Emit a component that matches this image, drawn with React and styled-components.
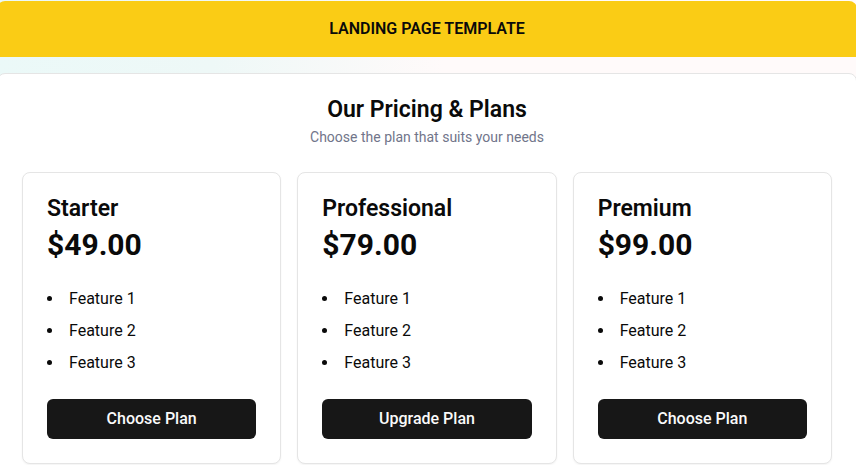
import React from "react";
import styled, { createGlobalStyle } from "styled-components";

const GlobalStyle = createGlobalStyle`
  *, *::before, *::after { box-sizing: border-box; }
  html { scrollbar-width: none; }
  body {
    margin: 0;
    overflow-x: hidden;
    background: #ffffff;
    color: #0a0a0a;
    font-family: Roboto, "Liberation Sans", sans-serif;
    font-size: 16px;
    line-height: 24px;
  }
  h1, h2, h3, p, ul { margin: 0; padding: 0; }
`;

const Page = styled.div`
  display: flex;
  flex-direction: column;
  gap: 16px;
  margin: 0 -1px 0 -3px;
  padding-top: 1px;
  background: linear-gradient(90deg, #ebf9f8 0%, #eef8f7 25%, #fffafa 52%, #fffafa 100%);
`;

const Banner = styled.header`
  padding: 16px;
  border-radius: 8px 8px 0 0;
  background: #facc15;
  text-align: center;
`;

const BannerTitle = styled.h1`
  font-size: 16px;
  font-weight: 600;
  line-height: 24px;
`;

const Panel = styled.main`
  padding: 24px;
  border: 1px solid #e5e5e5;
  border-radius: 8px;
  background: #ffffff;
`;

const Intro = styled.div`
  display: flex;
  flex-direction: column;
  gap: 5px;
  padding-bottom: 25px;
  text-align: center;
`;

const Heading = styled.h2`
  font-size: 23px;
  font-weight: 600;
  line-height: 24px;
`;

const Subtitle = styled.p`
  color: #71758a;
  font-size: 14px;
  line-height: 20px;
`;

const Plans = styled.div`
  display: grid;
  grid-template-columns: repeat(3, minmax(0, 1fr));
  gap: 16px;
`;

const PlanCard = styled.section`
  display: flex;
  flex-direction: column;
  gap: 24px;
  padding: 24px;
  border: 1px solid #e5e5e5;
  border-radius: 8px;
  background: #ffffff;
  box-shadow: 0 1px 2px rgba(0, 0, 0, 0.05);
`;

const PlanHeader = styled.div`
  display: flex;
  flex-direction: column;
  gap: 6px;
`;

const Price = styled.p`
  font-size: 30px;
  font-weight: 700;
  line-height: 36px;
`;

const Features = styled.ul`
  display: flex;
  flex-direction: column;
  gap: 8px;
  list-style: disc inside;
`;

const Feature = styled.li`
  line-height: 24px;
`;

const PlanButton = styled.button`
  width: 100%;
  height: 40px;
  padding: 8px 16px;
  border: 0;
  border-radius: 6px;
  background: #171717;
  color: #fafafa;
  font: inherit;
  font-weight: 500;
  cursor: pointer;

  &:hover { background: #2a2a2a; }
`;

const plans = [
  { name: "Starter", price: "$49.00", action: "Choose Plan" },
  { name: "Professional", price: "$79.00", action: "Upgrade Plan" },
  { name: "Premium", price: "$99.00", action: "Choose Plan" },
];

const features = ["Feature 1", "Feature 2", "Feature 3"];

export default function App() {
  return (
    <>
      <GlobalStyle />
      <Page>
        <Banner>
          <BannerTitle>LANDING PAGE TEMPLATE</BannerTitle>
        </Banner>
        <Panel>
          <Intro>
            <Heading>Our Pricing &amp; Plans</Heading>
            <Subtitle>Choose the plan that suits your needs</Subtitle>
          </Intro>
          <Plans>
            {plans.map((plan) => (
              <PlanCard key={plan.name}>
                <PlanHeader>
                  <Heading as="h3">{plan.name}</Heading>
                  <Price>{plan.price}</Price>
                </PlanHeader>
                <Features>
                  {features.map((feature) => (
                    <Feature key={feature}>{feature}</Feature>
                  ))}
                </Features>
                <PlanButton type="button">{plan.action}</PlanButton>
              </PlanCard>
            ))}
          </Plans>
        </Panel>
      </Page>
    </>
  );
}
